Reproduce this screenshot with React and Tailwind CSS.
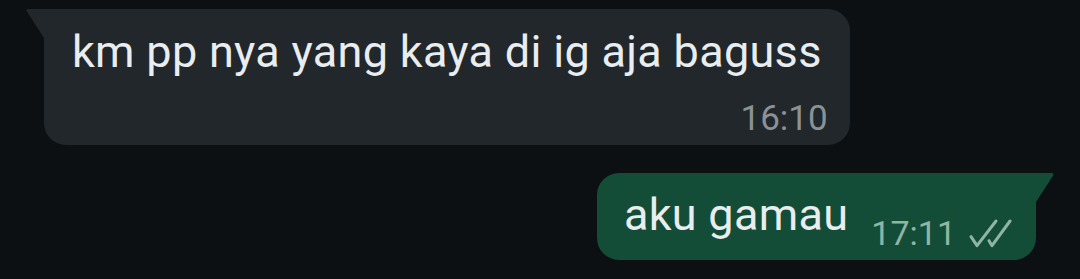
export default function App() {
  const font = { fontFamily: 'Roboto, "Noto Sans", sans-serif' };
  return (
    <div className="w-[1080px] h-[279px] bg-[#0c1013] overflow-hidden" style={font}>
      <div className="flex flex-col pt-[9px]">
        <div className="self-start ml-[44px] relative bg-[#21272b] rounded-[22px] rounded-tl-none pl-[28px] pr-[28px] pt-[20px] pb-[9px] flex flex-col">
          <svg className="absolute left-[-18px] top-0" width="19" height="29" viewBox="0 0 19 29">
            <path d="M18 0 L3 0 Q-1 0 1.5 3.5 L18 29 Z" fill="#21272b" />
          </svg>
          <div className="text-[45px] leading-[45px] tracking-[0.3px] text-[#e9edef]">km pp nya yang kaya di ig aja baguss</div>
          <div className="self-end mt-[27px] mr-[-6px] text-[35px] leading-[35px] text-[#8b9296]">16:10</div>
        </div>
        <div className="self-end mr-[44px] mt-[28px] relative bg-[#144d37] rounded-[22px] rounded-tr-none pl-[27px] pr-[24px] pt-[19px] pb-[9px] flex items-end">
          <svg className="absolute right-[-18px] top-0" width="19" height="29" viewBox="0 0 19 29">
            <path d="M1 0 L16 0 Q20 0 17.5 3.5 L1 29 Z" fill="#144d37" />
          </svg>
          <div className="mb-[14px] text-[45px] leading-[45px] tracking-[0.3px] text-[#e9edef]">aku gamau</div>
          <div className="ml-[23px] flex items-end gap-[12px] text-[34px] leading-[35px] text-[#8fb5a4]">
            <span>17:11</span>
            <svg className="mb-[3px]" width="44" height="30" viewBox="0 0 44 30" fill="none" stroke="#8fb5a4" strokeWidth="3" strokeLinecap="round" strokeLinejoin="round">
              <path d="M3 18.7 L9 27.7 L28 3" />
              <path d="M21 22.7 L24 27.7 L42 3" />
            </svg>
          </div>
        </div>
      </div>
    </div>
  );
}
